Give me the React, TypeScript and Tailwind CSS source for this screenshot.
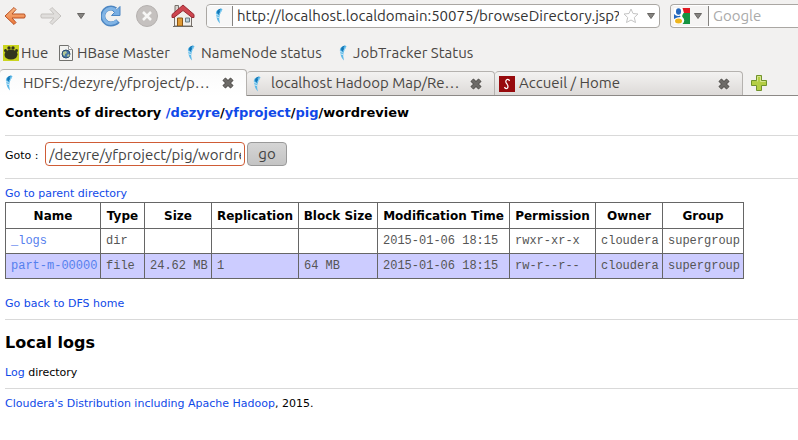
import React from "react";

const UI = "font-['Ubuntu','Noto_Sans',sans-serif]";

function Feather() {
  return (
    <svg width="16" height="16" viewBox="0 0 16 16" className="shrink-0" aria-hidden="true">
      <path d="M8.500 0.500Q4 1 3 4Q2.500 6 3.500 8Q3.500 12 7 15.500Q5.500 11 6.500 8Q7 5 9.500 1.500Z" fill="#5db9e8" />
      <path d="M8 0.500Q4.500 1 4 4L5 7L7 4L6.500 2.500Z" fill="#1275b5" />
      <path d="M3 6L5.500 7.500M3.500 9L6 9.500" stroke="#cdeaf8" />
      <path d="M8.500 2.500L7 5.500" stroke="#9bd6f3" />
    </svg>
  );
}

function Arrow({ forward = false }: { forward?: boolean }) {
  return (
    <svg width="24" height="20" viewBox="0 0 24 20" aria-hidden="true">
      <defs>
        <linearGradient id="orangeArrow" x1="0" y1="0" x2="0" y2="1">
          <stop offset="0" stopColor="#f9ba87" />
          <stop offset="1" stopColor="#ec7638" />
        </linearGradient>
      </defs>
      <path
        d={
          forward
            ? "M13 1.500L22 10L13 18.500L11 16.500L15 12H2.500Q1 10 2.500 8H15L11 3.500Z"
            : "M11 1.500L2 10L11 18.500L13 16.500L9 12H21.500Q23 10 21.500 8H9L13 3.500Z"
        }
        fill={forward ? "#e0dedc" : "url(#orangeArrow)"}
        stroke={forward ? "#c5c2bf" : "#b95226"}
        strokeLinejoin="round"
      />
    </svg>
  );
}

function Reload() {
  return (
    <svg width="20" height="22" viewBox="0 0 20 22" aria-hidden="true">
      <path d="M17 16Q14 19 10 19A8 8 0 1 1 14.500 4.500" fill="none" stroke="#4d86c2" strokeWidth="5" />
      <path d="M19 1.500V10.500H10.500L13.500 7.500L11 5L16 4.500Z" fill="#78aee3" stroke="#4d86c2" strokeLinejoin="round" />
      <path d="M16 16Q13 18.500 10 18.500A7.500 7.500 0 1 1 15 5.500" fill="none" stroke="#81b4e5" strokeWidth="3" />
    </svg>
  );
}

function Stop() {
  return (
    <svg width="24" height="24" viewBox="0 0 24 24" aria-hidden="true">
      <circle cx="12" cy="12" r="10.500" fill="#c5c1bf" stroke="#b5b1af" />
      <path d="M8 8L16 16M16 8L8 16" stroke="#f7f6f5" strokeWidth="2.500" />
    </svg>
  );
}

function House() {
  return (
    <svg width="24" height="24" viewBox="0 0 24 24" aria-hidden="true">
      <path d="M3.500 12L12 5L20.500 12V22H3.500Z" fill="#f1efeb" stroke="#77706a" />
      <path d="M4 1.500H7.500V8H4Z" fill="#d8d4cf" stroke="#77706a" />
      <path d="M12 1L23 10.500V13.500H21L12 6.500L3 13.500H1V10.500Z" fill="#cd454f" stroke="#982b33" strokeLinejoin="round" />
      <path d="M6.500 14H11.500V22H6.500Z" fill="#df9a35" stroke="#8b5513" />
      <path d="M14.500 14H18.500V18H14.500Z" fill="#bad1dd" stroke="#687b83" />
      <path d="M2 22.500H22" stroke="#706c66" />
    </svg>
  );
}

function Caret() {
  return (
    <svg width="8" height="6" viewBox="0 0 8 6" className="shrink-0" aria-hidden="true">
      <path d="M0.500 0.500H7.500L4 5.500Z" fill="#858380" stroke="#686663" />
    </svg>
  );
}

function Cross() {
  return (
    <svg width="14" height="14" viewBox="0 0 14 14" aria-hidden="true">
      <path d="M3 3L11 11M11 3L3 11" stroke="#555350" strokeWidth="4.500" />
      <path d="M3 3L11 11M11 3L3 11" stroke="#6d6b68" strokeWidth="2.500" />
    </svg>
  );
}

function Star() {
  return (
    <svg width="16" height="16" viewBox="0 0 16 16" className="shrink-0" aria-hidden="true">
      <path d="M8 1L10 5.500L15 6L11.300 9.500L12.500 14.500L8 12L3.500 14.500L4.700 9.500L1 6L6 5.500Z" fill="#fff" stroke="#c4c4c4" strokeLinejoin="round" />
    </svg>
  );
}

function GoogleMark() {
  return (
    <svg width="16" height="16" viewBox="0 0 16 16" aria-hidden="true">
      <path d="M0 0H16V16H0Z" fill="#fff" />
      <path d="M8.500 0H16V5H10Z" fill="#e21921" />
      <path d="M9.500 5H16V16H8.500Q12 12.500 8.500 9Q7.500 8 9.500 5Z" fill="#169442" />
      <path d="M0 6Q3 9 6 7.500L6.500 9Q3 9 0 11Z" fill="#2367bd" />
      <ellipse cx="4.500" cy="3.500" rx="2.500" ry="3.300" fill="#2367bd" />
      <ellipse cx="4.500" cy="13" rx="3.500" ry="2.500" fill="#eeb51d" />
    </svg>
  );
}

function Paw() {
  return (
    <svg width="16" height="16" viewBox="0 0 16 16" className="shrink-0" aria-hidden="true">
      <path d="M0 0H16V16H0Z" fill="#cbd51f" />
      <path d="M3 6Q8 3 13 6Q16 9 13 13Q8 16 3 13Q0 10 3 6Z" fill="#33351e" />
      <circle cx="2.500" cy="5.500" r="1.500" fill="#33351e" />
      <circle cx="6" cy="3" r="1.700" fill="#33351e" />
      <circle cx="10" cy="3" r="1.700" fill="#33351e" />
      <circle cx="13.500" cy="5.500" r="1.500" fill="#33351e" />
    </svg>
  );
}

function PageIcon() {
  return (
    <svg width="14" height="16" viewBox="0 0 14 16" className="shrink-0" aria-hidden="true">
      <path d="M1 0.500H9.500L13.500 4.500V15.500H0.500V0.500Z" fill="#f3f3f1" stroke="#71716e" />
      <path d="M9.500 0.500V4.500H13.500" fill="#fff" stroke="#999" />
      <circle cx="7" cy="9" r="4" fill="#4777a5" stroke="#294d6e" />
      <path d="M4 7L7 6L8 8L6 9L6 11L4 10ZM9 9L11 10L9 12L8 11Z" fill="#b4c995" />
    </svg>
  );
}

function RedS() {
  return (
    <svg width="16" height="16" viewBox="0 0 16 16" className="shrink-0" aria-hidden="true">
      <path d="M0 0H16V16H0Z" fill="#970a0d" />
      <path d="M10.500 5Q10 3 8 3.500Q5.500 5 8 8Q10 11 8 12.500Q6 13 5.500 11" fill="none" stroke="#fff" strokeWidth="1.200" />
    </svg>
  );
}

function Plus() {
  return (
    <svg width="18" height="18" viewBox="0 0 18 18" aria-hidden="true">
      <path d="M6.500 1.500H11.500V6.500H16.500V11.500H11.500V16.500H6.500V11.500H1.500V6.500H6.500Z" fill="#b4ce45" stroke="#71932c" />
      <path d="M7.500 7.500V2.500H10.500V7.500H15.500" fill="none" stroke="#d6e68d" />
    </svg>
  );
}

const bookmarks = [
  { name: "Hue", icon: <Paw />, width: "w-14", gap: "gap-0.5" },
  { name: "HBase Master", icon: <PageIcon />, width: "w-[126px]", gap: "gap-1" },
  { name: "NameNode status", icon: <Feather />, width: "w-[152px]", gap: "gap-0" },
  { name: "JobTracker Status", icon: <Feather />, width: "w-[150px]", gap: "gap-0" },
];

const tabs = [
  { name: "HDFS:/dezyre/yfproject/p…", icon: <Feather /> },
  { name: "localhost Hadoop Map/Re…", icon: <Feather /> },
  { name: "Accueil / Home", icon: <RedS /> },
];

const columns = [
  ["Name", "w-[95px]"],
  ["Type", "w-[44px]"],
  ["Size", "w-[67px]"],
  ["Replication", "w-[87px]"],
  ["Block Size", "w-[79px]"],
  ["Modification Time", "w-[132px]"],
  ["Permission", "w-[86px]"],
  ["Owner", "w-[67px]"],
  ["Group", "w-[81px]"],
];

const files = [
  ["_logs", "dir", "", "", "", "2015-01-06 18:15", "rwxr-xr-x", "cloudera", "supergroup"],
  ["part-m-00000", "file", "24.62 MB", "1", "64 MB", "2015-01-06 18:15", "rw-r--r--", "cloudera", "supergroup"],
];

function Link({ children }: { children: React.ReactNode }) {
  return <a href="#" className="text-[#1049e8]">{children}</a>;
}

function Browser() {
  return (
    <header className={`${UI} bg-[#f2f1f0] text-[15px] text-[#4a4744]`}>
      <div className="flex h-8 items-center overflow-hidden">
        <div className="flex w-[206px] shrink-0 items-center pl-[3px]">
          <button aria-label="Back" className="mr-3"><Arrow /></button>
          <button aria-label="Forward" className="mr-3.5"><Arrow forward /></button>
          <button aria-label="History" className="mr-4"><Caret /></button>
          <button aria-label="Reload" className="mr-3.5"><Reload /></button>
          <button aria-label="Stop" className="mr-3"><Stop /></button>
          <button aria-label="Home"><House /></button>
        </div>
        <div className="flex h-6 min-w-0 flex-1 items-center overflow-hidden rounded border border-[#aaa7a3] bg-white pr-1">
          <span className="flex h-5 w-[26px] shrink-0 items-center border-r border-[#858380] bg-[#f7f7f7] pl-1.5"><Feather /></span>
          <input aria-label="Address" className="min-w-0 flex-1 pl-1 text-[#333] outline-none" defaultValue="http://localhost.localdomain:50075/browseDirectory.jsp?dir=" />
          <span className="pl-1"><Star /></span>
          <button aria-label="Address history" className="ml-2"><Caret /></button>
        </div>
        <div className="ml-2.5 flex h-6 w-32 shrink-0 items-center overflow-hidden rounded-l border border-r-0 border-[#aaa7a3] bg-white">
          <button aria-label="Search engine" className="flex h-5 w-[38px] shrink-0 items-center gap-1 border-r border-[#858380] bg-[#f5f4f3] pl-[3px]"><GoogleMark /><Caret /></button>
          <input aria-label="Search" placeholder="Google" className="w-20 pl-1 outline-none placeholder:text-[#aaa]" />
        </div>
      </div>
      <nav className="flex h-[38px] items-center pl-[3px] pt-1">
        {bookmarks.map((b) => (
          <a key={b.name} href="#" className={`flex shrink-0 items-center whitespace-nowrap ${b.width} ${b.gap}`}>{b.icon}{b.name}</a>
        ))}
      </nav>
      <div className="flex h-[26px] items-end border-b border-[#8c8986]">
        {tabs.map((t, i) => (
          <div
            key={t.name}
            className={`flex w-[248px] shrink-0 items-center rounded-t border-r border-t border-[#b5b2af] pr-[11px] first:w-[247px] ${i === 0 ? "-mb-px h-[27px] border-[#999] bg-gradient-to-b from-[#fafafa] to-white pl-[3px]" : "h-6 bg-gradient-to-b from-[#f3f2f1] to-[#dddad8] pl-1"}`}
          >
            <button className="flex min-w-0 flex-1 items-center gap-1 whitespace-nowrap text-left">{t.icon}{t.name}</button>
            <button aria-label={`Close ${t.name}`}><Cross /></button>
          </div>
        ))}
        <button aria-label="New tab" className="ml-[7px] self-center"><Plus /></button>
      </div>
    </header>
  );
}

export default function App() {
  return (
    <div className="min-h-screen bg-white text-black">
      <Browser />
      <main className="pl-[5px] font-['DejaVu_Sans',sans-serif] text-[11px] leading-[14px]">
        <h1 className="pt-2 text-[13px] font-bold leading-[18px]">
          Contents of directory <Link>/dezyre</Link>/<Link>yfproject</Link>/<Link>pig</Link>/wordreview
        </h1>
        <hr className="mt-[13px] border-[#d9d9d9]" />
        <form className="flex h-[42px] items-center pb-1.5" onSubmit={(e) => e.preventDefault()}>
          <label htmlFor="goto" className="w-10 shrink-0 pt-1">Goto :</label>
          <input id="goto" defaultValue="/dezyre/yfproject/pig/wordreview" className={`${UI} h-6 w-[200px] rounded border border-[#cf5c36] px-[3px] text-[15px] text-[#444] outline-none`} />
          <button className={`${UI} ml-0.5 h-6 w-10 rounded border border-[#999] bg-gradient-to-b from-[#d5d5d5] to-[#c4c4c4] text-[15px] text-[#444]`}>go</button>
        </form>
        <hr className="border-[#d9d9d9]" />
        <p className="pb-px pt-2"><Link>Go to parent directory</Link></p>
        <table className="w-[739px] table-fixed border-collapse">
          <thead>
            <tr className="h-[26px]">
              {columns.map(([name, width]) => (
                <th key={name} className={`${width} whitespace-nowrap border border-[#666] p-0 text-[12px] font-bold`}>{name}</th>
              ))}
            </tr>
          </thead>
          <tbody className="font-['Liberation_Mono',monospace] text-[12px] text-[#555]">
            {files.map((row) => (
              <tr key={row[0]} className="h-[25px] even:bg-[#ccccff]">
                {row.map((cell, i) => (
                  <td key={i} className="whitespace-nowrap border border-[#666] py-0 pl-[5px] pr-0">
                    {i === 0 ? <a href="#" className="text-[#5580ee]">{cell}</a> : cell}
                  </td>
                ))}
              </tr>
            ))}
          </tbody>
        </table>
        <p className="pt-[18px]"><Link>Go back to DFS home</Link></p>
        <hr className="mt-2 border-[#d9d9d9]" />
        <h2 className="pt-3 text-[16px] font-bold leading-[22px]">Local logs</h2>
        <p className="pt-3"><Link>Log</Link> directory</p>
        <hr className="mt-2 border-[#d9d9d9]" />
        <p className="pt-2"><Link>Cloudera's Distribution including Apache Hadoop</Link>, 2015.</p>
      </main>
    </div>
  );
}
